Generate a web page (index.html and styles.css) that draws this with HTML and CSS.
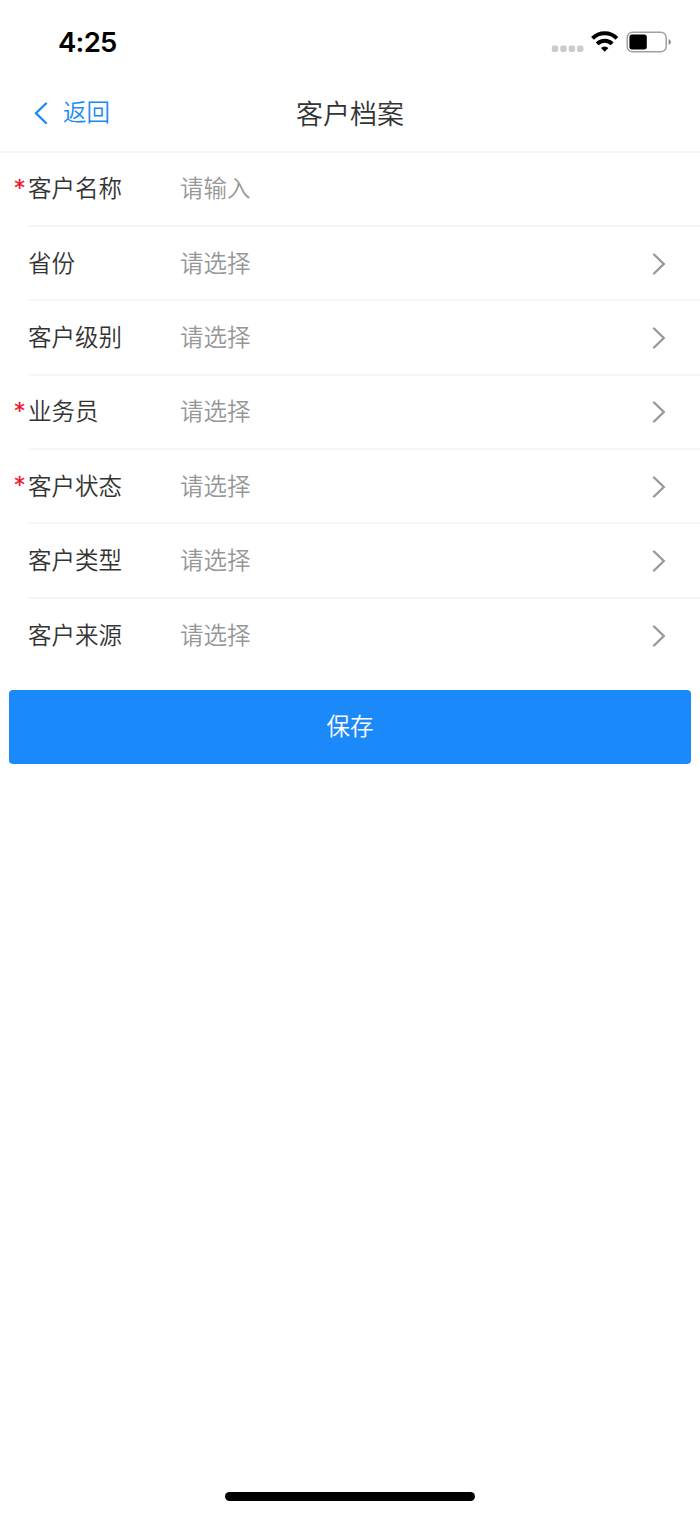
FILE: index.html
```html
<!DOCTYPE html>
<html lang="zh-CN">
<head>
<meta charset="utf-8">
<title>客户档案</title>
<link rel="stylesheet" href="styles.css">
</head>
<body>
<div class="screen">
  <div class="status">
    <span class="time">4:25</span>
    <svg class="indicators" width="124" height="28" viewBox="548 28 124 28">
      <g fill="#cbcbcb"><rect x="551.8" y="45.5" width="6.4" height="6.4" rx="2"/><rect x="560.3" y="45.5" width="6.4" height="6.4" rx="2"/><rect x="568.7" y="45.5" width="6.4" height="6.4" rx="2"/><rect x="577" y="45.5" width="6.4" height="6.4" rx="2"/></g>
      <g fill="none" stroke="#000" stroke-width="4"><path d="M592.5 38.4a17.3 17.3 0 0 1 24.4 0"/><path d="M597.2 43.8a10.6 10.6 0 0 1 15 0"/></g>
      <path d="M601 47.9a5.3 5.3 0 0 1 7.4 0l-3.7 3.9z"/>
      <rect x="627.2" y="32.2" width="39" height="19.6" rx="5.4" fill="none" stroke="#a0a0a0" stroke-width="1.5"/>
      <rect x="629.4" y="34.6" width="17.4" height="14.8" rx="2.6"/>
      <path d="M668.6 38.9q2.4 1 2.4 3.1t-2.4 3.1z" fill="#8a8a8a"/>
    </svg>
  </div>
  <header class="nav">
    <a class="back"><svg width="14" height="22" viewBox="0 0 14 22"><path d="M12 1.5 2 11.2 12 21"/></svg><span>返回</span></a>
    <h1 class="title">客户档案</h1>
  </header>
  <main>
    <div class="row"><span class="star">*</span><div class="cell"><span class="label">客户名称</span><span class="hint">请输入</span></div></div>
    <div class="row"><span class="star"></span><div class="cell"><span class="label">省份</span><span class="hint">请选择</span><svg class="arrow" width="14" height="22" viewBox="0 0 14 22"><path d="M2 1.5 11.8 11 2 20.5"/></svg></div></div>
    <div class="row"><span class="star"></span><div class="cell"><span class="label">客户级别</span><span class="hint">请选择</span><svg class="arrow" width="14" height="22" viewBox="0 0 14 22"><path d="M2 1.5 11.8 11 2 20.5"/></svg></div></div>
    <div class="row"><span class="star">*</span><div class="cell"><span class="label">业务员</span><span class="hint">请选择</span><svg class="arrow" width="14" height="22" viewBox="0 0 14 22"><path d="M2 1.5 11.8 11 2 20.5"/></svg></div></div>
    <div class="row"><span class="star">*</span><div class="cell"><span class="label">客户状态</span><span class="hint">请选择</span><svg class="arrow" width="14" height="22" viewBox="0 0 14 22"><path d="M2 1.5 11.8 11 2 20.5"/></svg></div></div>
    <div class="row"><span class="star"></span><div class="cell"><span class="label">客户类型</span><span class="hint">请选择</span><svg class="arrow" width="14" height="22" viewBox="0 0 14 22"><path d="M2 1.5 11.8 11 2 20.5"/></svg></div></div>
    <div class="row"><span class="star"></span><div class="cell"><span class="label">客户来源</span><span class="hint">请选择</span><svg class="arrow" width="14" height="22" viewBox="0 0 14 22"><path d="M2 1.5 11.8 11 2 20.5"/></svg></div></div>
    <button class="save">保存</button>
  </main>
  <div class="home"></div>
</div>
</body>
</html>
```
FILE: styles.css
```css
* { box-sizing: border-box; }
body { margin: 0; background: #fff; font-family: "Noto Sans CJK SC", sans-serif; font-weight: 350; color: #333; }
.screen { width: 700px; height: 1515px; display: flex; flex-direction: column; overflow: hidden; }
.status { height: 75px; padding: 28px 28px 0 58px; display: flex; justify-content: space-between; align-items: flex-start; }
.time { font: 600 27.5px/28px Inter, sans-serif; letter-spacing: -0.7px; color: #000; }
.nav { height: 77.5px; border-bottom: 2px solid #f5f5f5; display: grid; grid-template-columns: 1fr auto 1fr; align-items: center; }
.back { display: flex; align-items: center; gap: 15px; padding-left: 34px; color: #1b89fa; font-size: 23.5px; line-height: 34px; }
.back span { padding-bottom: 3px; }
.back path { fill: none; stroke: #1b89fa; stroke-width: 2.3; stroke-linecap: round; }
.title { margin: 0; font-size: 27px; font-weight: 350; line-height: 40px; }
.row { height: 74.4px; display: flex; font-size: 23.5px; line-height: 34px; }
.star { width: 28px; padding: 18px 0 0 14.5px; color: #ee0a24; font: 400 20.5px/34px "DejaVu Sans", sans-serif; -webkit-text-stroke: 0.4px #ee0a24; }
.cell { flex: 1; display: flex; align-items: center; border-bottom: 2px solid #f6f6f6; padding-right: 34px; }
.row:last-of-type .cell { border-bottom-color: transparent; }
.label, .hint { padding-bottom: 3px; }
.label { width: 152px; }
.hint { flex: 1; color: #969799; }
.arrow { margin-top: 1px; }
.arrow path { fill: none; stroke: #969799; stroke-width: 2.3; stroke-linecap: round; }
.save { display: block; width: 682px; height: 74.5px; margin: 16.3px auto 0; padding: 0 0 3px; border: 0; border-radius: 4px; background: #1b89fa; color: #fff; font: 350 23.5px/34px "Noto Sans CJK SC", sans-serif; }
.home { width: 250px; height: 9px; margin: auto auto 14px; border-radius: 5px; background: #000; }
```
